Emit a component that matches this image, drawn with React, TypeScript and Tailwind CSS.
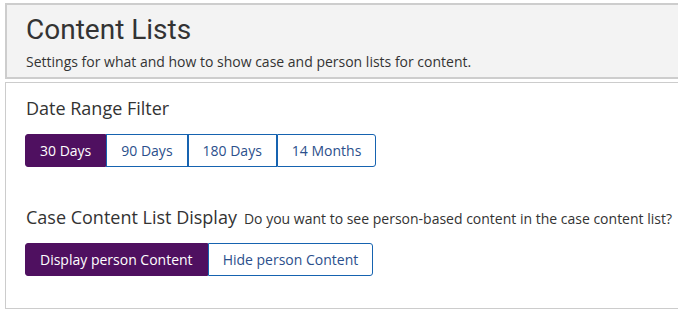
import React from "react";

const sans = { fontFamily: '"Open Sans", "Liberation Sans", sans-serif' };

function Group({ items, active }: { items: string[]; active: number }) {
  return (
    <div className="flex">
      {items.map((t, i) => {
        const first = i === 0;
        const last = i === items.length - 1;
        const on = i === active;
        return (
          <button
            key={t}
            className={
              "h-[33px] px-[14px] text-[14px] leading-none border " +
              (on
                ? "bg-[#4f1060] border-[#4f1060] text-white "
                : "bg-white border-[#1663b0] text-[#2b4f8c] ") +
              (first ? "rounded-l-[3px] " : "") +
              (last ? "rounded-r-[3px] " : "")
            }
            style={sans}
          >
            {t}
          </button>
        );
      })}
    </div>
  );
}

export default function App() {
  return (
    <div className="w-[678px] h-[318px] overflow-hidden bg-white" style={sans}>
      <div className="ml-[5px] mt-[3px] w-[700px] h-[76px] border-2 border-[#cdcdcd] bg-[#f3f3f3] pl-[19px] pt-[8px]">
        <div className="text-[28px] leading-[34px] text-[#333]" style={{ fontFamily: 'Roboto, "Open Sans", sans-serif' }}>
          Content Lists
        </div>
        <div className="mt-[5px] text-[14px] leading-[20px] text-[#333]">
          Settings for what and how to show case and person lists for content.
        </div>
      </div>
      <div className="ml-[5px] mt-[3px] w-[700px] h-[227px] border border-[#cccccc] pl-[19px] pt-[13px]">
        <div className="pl-[1px] text-[18px] leading-[24px] text-[#333]">Date Range Filter</div>
        <div className="mt-[14px]">
          <Group items={["30 Days", "90 Days", "180 Days", "14 Months"]} active={0} />
        </div>
        <div className="mt-[38px] pl-[1px] flex items-baseline gap-[7px] text-[#333]">
          <span className="text-[18px] leading-[24px]">Case Content List Display</span>
          <span className="text-[14px]">Do you want to see person-based content in the case content list?</span>
        </div>
        <div className="mt-[14px]">
          <Group items={["Display person Content", "Hide person Content"]} active={0} />
        </div>
      </div>
    </div>
  );
}
